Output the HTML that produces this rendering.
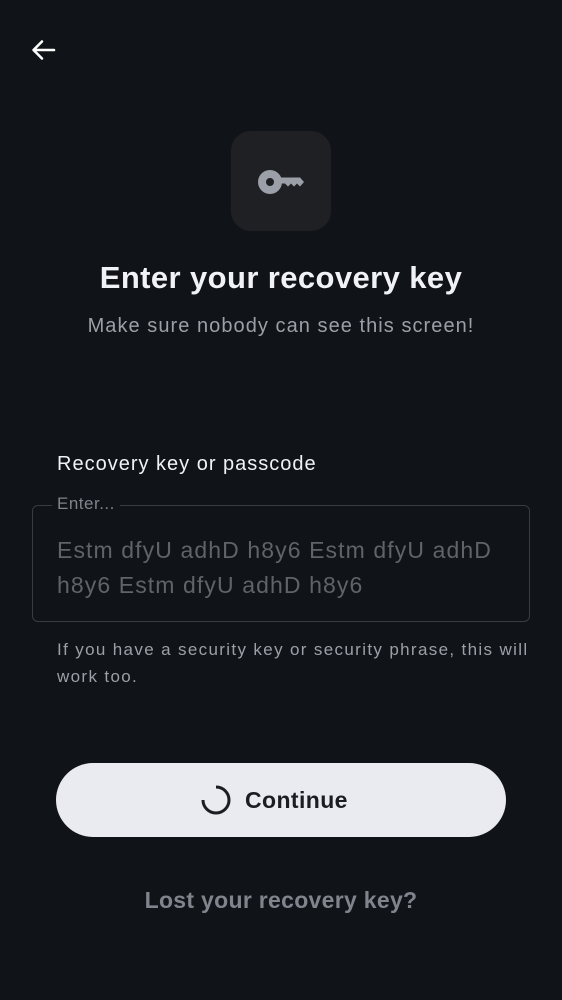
<!DOCTYPE html>
<html><head><meta charset="utf-8"><style>
*{margin:0;padding:0;box-sizing:border-box}
body{width:562px;height:1000px;background:#101317;font-family:"Liberation Sans",sans-serif;position:relative;overflow:hidden}
.a{position:absolute}
</style></head><body>
<svg class="a" style="left:30px;top:38px" width="26" height="24" viewBox="0 0 26 24"><path d="M24 12H4M12 3.5L3.5 12 12 20.5" stroke="#fff" stroke-width="2.6" fill="none" stroke-linecap="round" stroke-linejoin="round"/></svg>
<div class="a" style="left:231px;top:131px;width:100px;height:100px;border-radius:20px;background:#1f2024"></div>
<svg class="a" style="left:256px;top:167px" width="50" height="30" viewBox="0 0 50 30"><circle cx="14" cy="15" r="12" fill="#9ba0a8"/><circle cx="14" cy="15" r="4" fill="#1f2024"/><path d="M22 10.5H44L48 15 44 19.5 41 16.5 38 19.5 35 16.5 32 19.5 29 16.5H22Z" fill="#9ba0a8"/></svg>
<div class="a" style="left:0;width:562px;top:260px;text-align:center;color:#f0f2f5;font-size:31px;font-weight:bold;letter-spacing:0.4px">Enter your recovery key</div>
<div class="a" style="left:0;width:562px;top:315px;text-align:center;color:#9ba0a8;font-size:20px;letter-spacing:1.05px">Make sure nobody can see this screen!</div>
<div class="a" style="left:57px;top:453px;color:#f0f2f5;font-size:20px;letter-spacing:1px">Recovery key or passcode</div>
<div class="a" style="left:32px;top:505px;width:498px;height:117px;border:1px solid #393c42;border-radius:6px"></div>
<div class="a" style="left:52px;top:494px;padding:0 5px;background:#101317;color:#80848c;font-size:17px;letter-spacing:0.5px">Enter...</div>
<div class="a" style="left:57px;top:533px;width:450px;color:#5f636a;font-size:23px;line-height:35px;letter-spacing:1.1px">Estm dfyU adhD h8y6 Estm dfyU adhD h8y6 Estm dfyU adhD h8y6</div>
<div class="a" style="left:57px;top:636px;width:480px;color:#9ba0a8;font-size:17px;line-height:27px;letter-spacing:1.35px">If you have a security key or security phrase, this will work too.</div>
<div class="a" style="left:56px;top:763px;width:450px;height:74px;border-radius:37px;background:#e9ebf0"></div>
<svg class="a" style="left:200px;top:784px" width="32" height="32" viewBox="0 0 32 32"><path d="M16 3A13 13 0 1 1 3 16" stroke="#1b1d22" stroke-width="3" fill="none"/></svg>
<div class="a" style="left:245px;top:787px;color:#1b1d22;font-size:23px;font-weight:bold;letter-spacing:0.4px">Continue</div>
<div class="a" style="left:0;width:562px;top:887px;text-align:center;color:#80848c;font-size:23px;font-weight:bold;letter-spacing:0.3px">Lost your recovery key?</div>
</body></html>
